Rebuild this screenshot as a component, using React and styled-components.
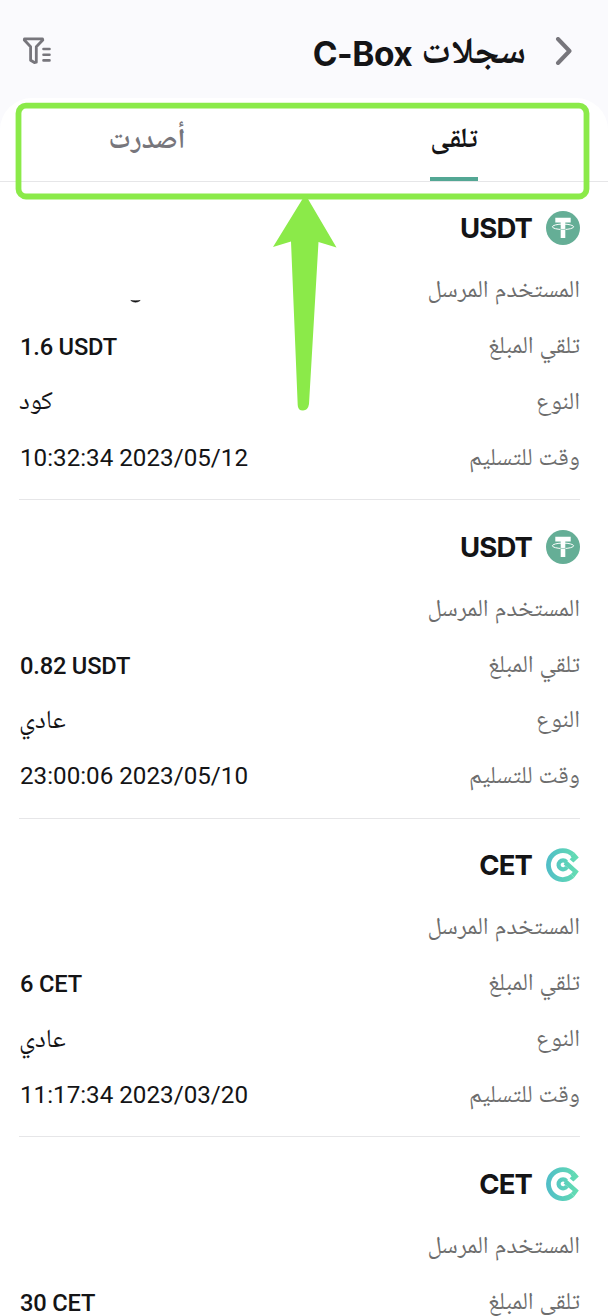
import React from 'react'
import styled, { createGlobalStyle, css } from 'styled-components'

const GlobalStyle = createGlobalStyle`
  * {
    box-sizing: border-box;
  }

  body {
    margin: 0;
    background: #fafafd;
    font-family: Roboto, 'Noto Naskh Arabic', sans-serif;
    color: #141416;
  }
`

const Screen = styled.div`
  width: 608px;
  height: 1316px;
  position: relative;
  overflow: hidden;
  display: flex;
  flex-direction: column;
`

const Header = styled.header`
  height: 98px;
  flex: none;
  display: flex;
  align-items: center;
  padding: 4px 35px 0 22px;
`

const HeaderTitle = styled.h1`
  margin: 0 29px 0 auto;
  display: flex;
  align-items: center;
  gap: 9px;
  font-size: 37.5px;
  line-height: 40px;
  font-weight: 700;
`

const TitleText = styled.span`
  padding-bottom: 3px;
`

const Brand = styled.span`
  padding-top: 5px;
  font-family: Inter, sans-serif;
  font-size: 33.5px;
  font-weight: 650;
  letter-spacing: -0.5px;
`

const Panel = styled.main`
  flex: 1;
  background: white;
  border-radius: 32px 32px 0 0;
`

const Tabs = styled.nav`
  height: 84px;
  display: flex;
  border-bottom: 1px solid #e6e6e8;
`

const Tab = styled.button`
  width: ${(props) => props.$width}px;
  flex: none;
  display: flex;
  justify-content: center;
  padding: 0;
  border: 0;
  background: none;
  font: inherit;
  font-size: 28px;
  font-weight: 700;
  color: ${(props) => (props.$active ? '#141416' : '#77767c')};
`

const TabLabel = styled.span`
  height: 83px;
  width: 48px;
  padding-top: 4px;
  display: flex;
  align-items: center;
  justify-content: center;
  white-space: nowrap;
  ${(props) =>
    props.$active &&
    css`
      padding-top: 6px;
      border-bottom: 4px solid #53a794;
    `}
`

const Card = styled.section`
  height: 318.6px;
  margin: 0 28px 0 19px;
  padding-top: 23.5px;
  border-bottom: 1px solid #e6e6e8;

  &:first-of-type {
    height: 318.2px;
    padding-top: 23px;
  }
`

const CoinRow = styled.div`
  height: 46px;
  margin-bottom: 11px;
  display: flex;
  align-items: center;
  gap: 14px;
`

const CoinName = styled.h2`
  margin: 0;
  font-family: Inter, sans-serif;
  font-size: 27.5px;
  font-weight: 680;
  letter-spacing: -0.9px;
`

const Row = styled.div`
  height: 55.9px;
  display: flex;
  align-items: center;
  justify-content: space-between;
`

const Label = styled.span`
  padding-top: 3px;
  font-size: 24.3px;
  color: #6d6d6d;
`

const Value = styled.span`
  padding-left: 1px;
  direction: ltr;
  font-size: 24.2px;
`

const Amount = styled(Value)`
  padding-top: 2px;
  font-size: 23.7px;
  font-weight: 500;
  letter-spacing: -0.2px;
`

const Kind = styled(Value)`
  padding: 3px 0 0;
  font-size: 26px;
`

const Annotation = styled.svg`
  position: absolute;
  left: 0;
  top: 0;
  pointer-events: none;
`

const NameSlot = styled.span`
  padding: 25px 0 0 100px;
  line-height: 0;
`

const FilterIcon = () => (
  <svg width="30" height="28" viewBox="0 0 30 28" fill="none" stroke="#77767c" strokeWidth="2.8" strokeLinecap="round" strokeLinejoin="round">
    <path d="M2.5 1.8H20.5L20.8 3L14.3 9.8V25.2L12.4 25.5L8.6 23.2V9.8L2.3 3Z" />
    <path d="M21.5 12H27.5M21.5 17.7H27.5M21.5 23.4H27.5" strokeWidth="2.6" />
  </svg>
)

const BackIcon = () => (
  <svg width="18" height="28" viewBox="0 0 18 28" fill="none" stroke="#77767c" strokeWidth="4" strokeLinecap="round" strokeLinejoin="round">
    <path d="M3 2L14.5 14L3 26" />
  </svg>
)

const TetherIcon = () => (
  <svg width="34" height="34" viewBox="0 0 34 34">
    <circle cx="17" cy="17" r="17" fill="#65ae96" />
    <ellipse cx="17" cy="15.8" rx="10.6" ry="2.7" fill="none" stroke="white" strokeWidth="1" />
    <path d="M9.3 6.8H24.7V11.4H19.3V27H14.7V11.4H9.3Z" fill="white" />
    <path d="M14 18.3Q17 18.7 20 18.3" fill="none" stroke="#65ae96" strokeWidth="0.6" />
  </svg>
)

const CetIcon = () => (
  <svg width="34" height="34" viewBox="0 0 34 34" fill="none" stroke="url(#cet)">
    <defs>
      <linearGradient id="cet" gradientUnits="userSpaceOnUse" x1="0" y1="17" x2="34" y2="17">
        <stop offset="0" stopColor="#50bdc8" />
        <stop offset="1" stopColor="#65dfb0" />
      </linearGradient>
    </defs>
    <path d="M27 6.6A14.5 14.5 0 1 0 26.6 27.9" strokeWidth="4.8" />
    <path d="M24.6 8.6L28.6 4.8L32.8 9.6L27.4 14.4L23.6 11.2L25.6 9.6Z" fill="url(#cet)" stroke="none" />
    <path d="M24.9 26.1L26.8 24L17.6 16.4L20.6 12.4L32.8 23.6L28.2 29.6Z" fill="url(#cet)" stroke="none" />
    <path d="M20.4 13.8A4.5 4.5 0 1 0 20.9 19.2" strokeWidth="4.2" />
  </svg>
)

// only the lower edge of the sender name shows
const CutName = () => (
  <svg width="40" height="6" viewBox="0 0 40 6">
    <path d="M11.8 1.5Q16.5 2 21.2 1.5Q16.5 4.8 11.8 1.5Z" fill="#141416" stroke="#141416" strokeWidth="0.6" />
  </svg>
)

const records = [
  { coin: 'USDT', cutName: true, amount: '1.6 USDT', type: 'كود', time: '10:32:34 2023/05/12' },
  { coin: 'USDT', amount: '0.82 USDT', type: 'عادي', time: '23:00:06 2023/05/10' },
  { coin: 'CET', amount: '6 CET', type: 'عادي', time: '11:17:34 2023/03/20' },
  { coin: 'CET', amount: '30 CET' },
]

const Record = ({ coin, cutName, amount, type, time }) => (
  <Card>
    <CoinRow>
      {coin === 'USDT' ? <TetherIcon /> : <CetIcon />}
      <CoinName>{coin}</CoinName>
    </CoinRow>
    <Row>
      <Label>المستخدم المرسل</Label>
      {cutName && (
        <NameSlot>
          <CutName />
        </NameSlot>
      )}
    </Row>
    <Row>
      <Label>تلقي المبلغ</Label>
      <Amount>{amount}</Amount>
    </Row>
    {type && (
      <Row>
        <Label>النوع</Label>
        <Kind>{type}</Kind>
      </Row>
    )}
    {time && (
      <Row>
        <Label>وقت للتسليم</Label>
        <Value>{time}</Value>
      </Row>
    )}
  </Card>
)

const App = () => {
  return (
    <>
      <GlobalStyle />
      <Screen>
        <Header>
          <FilterIcon />
          <HeaderTitle>
            <Brand>C-Box</Brand>
            <TitleText>سجلات</TitleText>
          </HeaderTitle>
          <BackIcon />
        </Header>
        <Panel dir="rtl">
          <Tabs>
            <Tab $active $width={308}>
              <TabLabel $active>تلقى</TabLabel>
            </Tab>
            <Tab $width={306}>
              <TabLabel>أصدرت</TabLabel>
            </Tab>
          </Tabs>
          {records.map((record, i) => (
            <Record key={i} {...record} />
          ))}
        </Panel>
        <Annotation width="608" height="420" viewBox="0 0 608 420">
          <rect x="18.5" y="105.7" width="568" height="90.8" rx="7.5" fill="none" stroke="#8bea49" strokeWidth="5.8" />
          <path d="M302.5 199H308L336.5 247.5L318.5 242L309 404Q308 410.5 303 410.5Q297.8 410.5 297.7 405L291 241.5L273 247Z" fill="#8bea49" />
        </Annotation>
      </Screen>
    </>
  )
}

export default App
